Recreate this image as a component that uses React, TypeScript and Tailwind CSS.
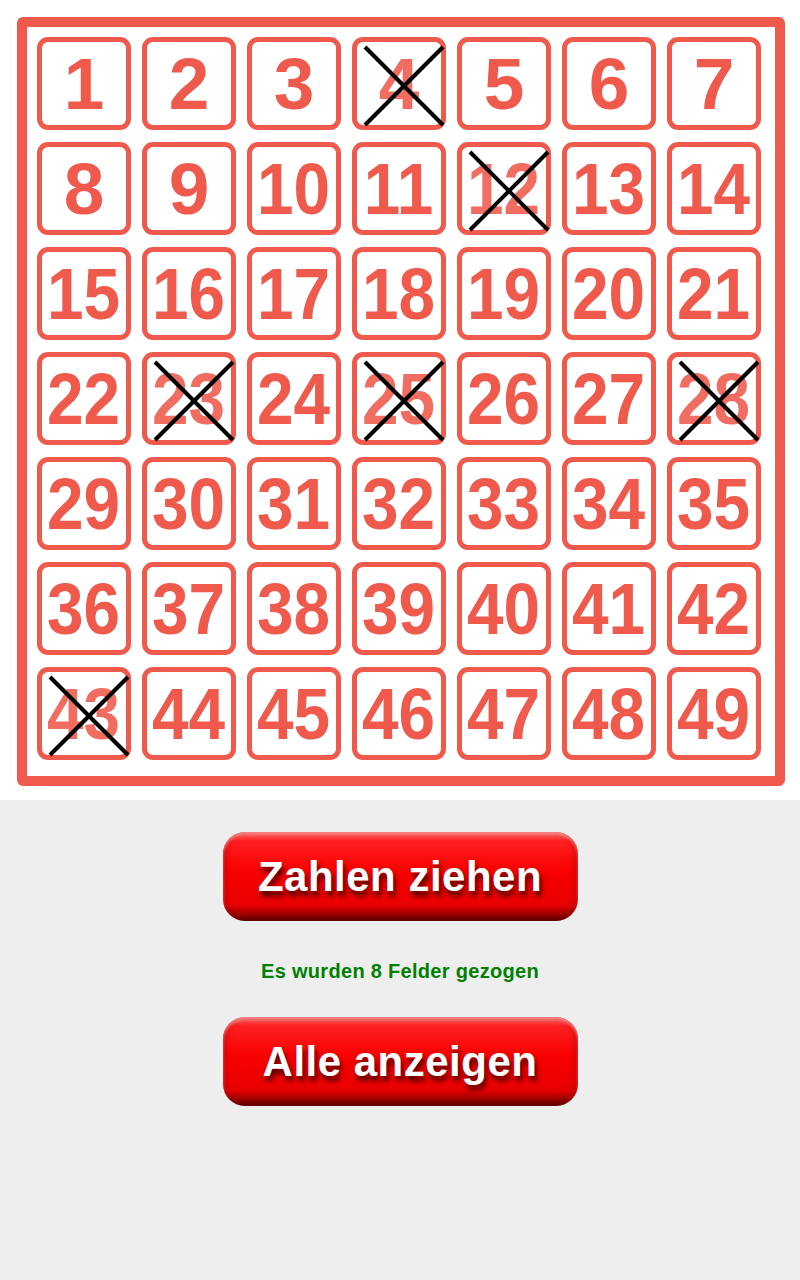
import React from 'react';

const crossed = [4, 12, 23, 25, 28, 43];

const Cross = () => (
  <svg className="absolute left-[6px] top-[3px] w-[82px] h-[82px]" viewBox="0 0 82 82">
    <line x1="2" y1="2" x2="80" y2="80" stroke="#000" strokeWidth="4" />
    <line x1="80" y1="2" x2="2" y2="80" stroke="#000" strokeWidth="4" />
  </svg>
);

const Cell = ({ n }: { n: number }) => {
  const isCrossed = crossed.includes(n);
  return (
    <div className="relative w-[94px] h-[93px] rounded-[11px] border-[5px] border-[#ef5a4d] bg-white flex items-center justify-center">
      <span
        className={`inline-block text-[73px] leading-none font-bold ${n > 9 ? 'scale-x-[0.9]' : ''} ${
          isCrossed ? 'text-[#f26d61]' : 'text-[#ef5a4d]'
        }`}
      >
        {n}
      </span>
      {isCrossed && <Cross />}
    </div>
  );
};

const RedButton = ({ label }: { label: string }) => (
  <button
    className="w-[355px] h-[89px] mx-auto flex items-center justify-center rounded-[22px] bg-[linear-gradient(to_bottom,#ff7070_0%,#ff2020_10%,#f80000_45%,#e80000_82%,#a00000_92%,#4a0000_100%)] shadow-[inset_0_3px_3px_rgba(255,150,150,0.7),inset_4px_0_6px_rgba(150,0,0,0.35),inset_-4px_0_6px_rgba(150,0,0,0.35)]"
  >
    <span className="text-white font-bold text-[42px] leading-none tracking-[0.5px] [text-shadow:2px_5px_5px_rgba(60,0,0,0.9)]">
      {label}
    </span>
  </button>
);

export default function App() {
  const numbers = Array.from({ length: 49 }, (_, i) => i + 1);

  return (
    <div className="w-[800px] min-h-[1280px] bg-[#eeeeee] font-['Liberation_Sans',Arial,sans-serif]">
      {/* Lotto ticket */}
      <div className="bg-white h-[800px] pt-[17px] pl-[17px]">
        <div className="w-[768px] h-[769px] rounded-[6px] border-[10px] border-[#ef5a4d] pt-[10px] pl-[10px]">
          <div className="grid grid-cols-[repeat(7,94px)] gap-x-[11px] gap-y-[12px]">
            {numbers.map(n => (
              <Cell key={n} n={n} />
            ))}
          </div>
        </div>
      </div>

      {/* Controls */}
      <div className="flex flex-col items-center pt-[32px]">
        <RedButton label="Zahlen ziehen" />
        <p className="mt-[40px] text-[20px] leading-none font-bold text-[#008000] tracking-[0.3px]">
          Es wurden 8 Felder gezogen
        </p>
        <div className="mt-[36px] w-full flex">
          <RedButton label="Alle anzeigen" />
        </div>
      </div>
    </div>
  );
}
